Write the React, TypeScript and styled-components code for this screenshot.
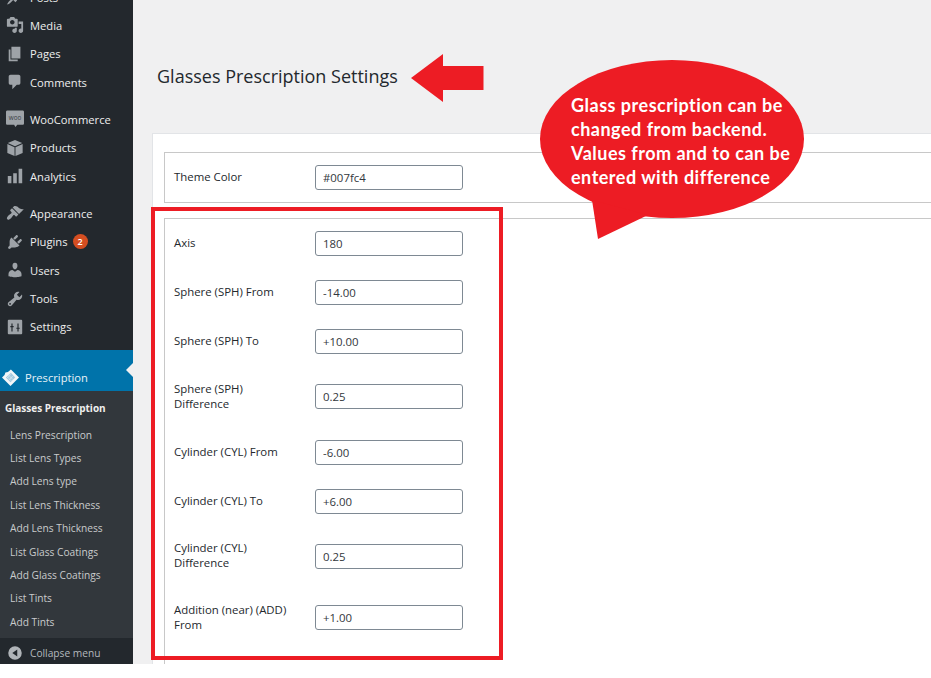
import React from "react";
import styled, { createGlobalStyle } from "styled-components";

const GlobalStyle = createGlobalStyle`
  html, body {
    margin: 0;
    padding: 0;
    background: #fff;
    font-family: "Open Sans", "Liberation Sans", sans-serif;
  }
  * {
    box-sizing: border-box;
  }
`;

const icons: Record<string, React.ReactNode> = {
  posts: (
    <path d="M10.44 3.02l1.82-1.82 6.36 6.35-1.83 1.82c-1.05-.68-2.48-.57-3.41.36l-.75.75c-.92.93-1.04 2.35-.35 3.41l-1.83 1.82-2.41-2.41-2.8 2.79c-.42.42-3.38 2.71-3.8 2.29s1.86-3.39 2.28-3.81l2.79-2.79L4.1 9.36l1.83-1.82c1.05.69 2.48.57 3.4-.36l.75-.75c.93-.92 1.05-2.35.36-3.41z" />
  ),
  media: (
    <path d="M13 11V4c0-.55-.45-1-1-1h-1.67L9 1H5L3.67 3H2c-.55 0-1 .45-1 1v7c0 .55.45 1 1 1h10c.55 0 1-.45 1-1zM7 4.5c1.38 0 2.5 1.12 2.5 2.5S8.38 9.5 7 9.5 4.5 8.38 4.5 7 5.62 4.5 7 4.5zM14 6h5v10.5c0 1.38-1.12 2.5-2.5 2.5S14 17.88 14 16.5s1.12-2.5 2.5-2.5c.17 0 .34.02.5.05V9h-3V6zm-4 8.05V13h2v3.5c0 1.38-1.12 2.5-2.5 2.5S7 17.88 7 16.5 8.12 14 9.5 14c.17 0 .34.02.5.05z" />
  ),
  pages: <path d="M6 15V2h10v13H6zm-1 1h8v2H3V5h2v11z" />,
  comments: (
    <path d="M5 2h9c1.1 0 2 .9 2 2v7c0 1.1-.9 2-2 2h-2l-5 5v-5H5c-1.1 0-2-.9-2-2V4c0-1.1.9-2 2-2z" />
  ),
  woo: (
    <>
      <path d="M1.5 0.5h17c.8 0 1.5.7 1.5 1.5v13c0 .8-.7 1.5-1.5 1.5h-6l-2 2.5-1.5-2.5H1.5C.7 16.5 0 15.8 0 15V2C0 1.2.7.5 1.5.5z" />
      <text x="10" y="11" fontSize="7" textAnchor="middle" fill="#3a3f44" fontFamily="Open Sans, sans-serif">
        woo
      </text>
    </>
  ),
  products: (
    <>
      <path d="M10 1l8 3.5-8 3.6-8-3.6z" />
      <path d="M1.5 5.5l8 3.6V19l-8-3.5z" />
      <path d="M18.5 5.5l-8 3.6V19l8-3.5z" />
    </>
  ),
  analytics: <path d="M18 18V2h-4v16h4zm-6 0V7H8v11h4zm-6 0v-8H2v8h4z" />,
  appearance: (
    <path d="M14.48 11.06L7.41 3.99l1.5-1.5c.5-.56 2.3-.47 3.51.32 1.21.8 1.43 1.28 2.91 2.1 1.18.64 2.45 1.26 4.45.85zm-.71.71L6.7 4.7 4.93 6.47c-.39.39-.39 1.02 0 1.41l1.06 1.06c.39.39.39 1.03 0 1.42-.6.6-1.43 1.11-2.21 1.69-.35.26-.7.53-1.01.84C1.43 14.23.4 16.08 1.4 17.07c.99 1 2.84-.03 4.18-1.36.31-.31.58-.66.85-1.02.57-.78 1.08-1.61 1.69-2.21.39-.39 1.02-.39 1.41 0l1.06 1.06c.39.39 1.02.39 1.41 0z" />
  ),
  plugins: (
    <path d="M13.11 4.36L9.87 7.6 8 5.73l3.24-3.24c.35-.34 1.05-.2 1.56.32.52.51.66 1.21.31 1.55zm-8 1.77l.91-1.12 9.01 9.01-1.19.84c-.71.71-2.63 1.16-3.82 1.16H6.14L4.9 17.26c-.59.59-1.54.59-2.12 0-.59-.58-.59-1.53 0-2.12l1.24-1.24v-3.88c0-1.13.4-3.19 1.09-3.89zm7.26 3.97l3.24-3.24c.34-.35 1.04-.21 1.55.31.52.51.66 1.21.31 1.55l-3.24 3.25z" />
  ),
  users: (
    <path d="M10 9.25c-2.27 0-2.73-3.44-2.73-3.44C7 4.02 7.82 2 9.97 2c2.16 0 2.98 2.02 2.71 3.81 0 0-.41 3.44-2.68 3.44zm0 2.57L12.72 10c2.39 0 4.52 2.33 4.52 4.53v2.49s-3.65 1.13-7.24 1.13c-3.65 0-7.24-1.13-7.24-1.13v-2.49c0-2.25 1.94-4.48 4.47-4.48z" />
  ),
  tools: (
    <path d="M16.68 9.77c-1.34 1.34-3.3 1.67-4.95.99l-5.41 6.52c-.99.99-2.59.99-3.58 0s-.99-2.59 0-3.57l6.52-5.42c-.68-1.65-.35-3.61.99-4.95 1.28-1.28 3.12-1.62 4.72-1.06l-2.89 2.89 2.82 2.82 2.86-2.87c.53 1.58.18 3.39-1.08 4.65zM3.81 16.21c.4.39 1.04.39 1.43 0 .4-.4.4-1.04 0-1.43-.39-.4-1.03-.4-1.43 0-.39.39-.39 1.03 0 1.43z" />
  ),
  settings: (
    <path
      fillRule="evenodd"
      d="M3 2h14c.6 0 1 .4 1 1v14c0 .6-.4 1-1 1H3c-.6 0-1-.4-1-1V3c0-.6.4-1 1-1zm3 4v3H4.8v1.3H6V15h1.3v-4.7h1.2V9H7.3V6H6zm6.7 0v4.7h-1.2V12h1.2v3H14v-3h1.2v-1.3H14V6h-1.3z"
    />
  ),
};

const mainMenu = [
  { icon: "posts", label: "Posts" },
  { icon: "media", label: "Media" },
  { icon: "pages", label: "Pages" },
  { icon: "comments", label: "Comments" },
  { icon: "woo", label: "WooCommerce", gap: true },
  { icon: "products", label: "Products" },
  { icon: "analytics", label: "Analytics" },
  { icon: "appearance", label: "Appearance", gap: true },
  { icon: "plugins", label: "Plugins", badge: 2 },
  { icon: "users", label: "Users" },
  { icon: "tools", label: "Tools" },
  { icon: "settings", label: "Settings" },
];

const subMenu = [
  "Lens Prescription",
  "List Lens Types",
  "Add Lens type",
  "List Lens Thickness",
  "Add Lens Thickness",
  "List Glass Coatings",
  "Add Glass Coatings",
  "List Tints",
  "Add Tints",
];

const fields = [
  { label: "Axis", value: "180" },
  { label: "Sphere (SPH) From", value: "-14.00" },
  { label: "Sphere (SPH) To", value: "+10.00" },
  { label: "Sphere (SPH) Difference", value: "0.25" },
  { label: "Cylinder (CYL) From", value: "-6.00" },
  { label: "Cylinder (CYL) To", value: "+6.00" },
  { label: "Cylinder (CYL) Difference", value: "0.25" },
  { label: "Addition (near) (ADD) From", value: "+1.00" },
];

function App() {
  return (
    <Page>
      <GlobalStyle />
      <Sidebar>
        <MenuList>
          {mainMenu.map((item) => (
            <MenuItem key={item.label} $gap={item.gap}>
              <MenuIcon viewBox="0 0 20 20">{icons[item.icon]}</MenuIcon>
              {item.label}
              {item.badge && <Badge>{item.badge}</Badge>}
            </MenuItem>
          ))}
        </MenuList>
        <ActiveItem>
          <ActiveIcon viewBox="0 0 20 20">
            <path d="M10.5 0.5L20 10 10 20 0 10l3-3 1-3 3-.5z" fill="#f2f6f8" />
            <path d="M10.5 4.5L15.5 10 10 15.5 4.5 10z" fill="#a3c9de" />
            <path
              d="M8 7.5l5 5M6.5 9.5l5 5M10.5 5.5l-4.5 5M13 8l-5 5"
              stroke="#e4f0f6"
              strokeWidth="0.7"
              fill="none"
            />
          </ActiveIcon>
          Prescription
          <Notch />
        </ActiveItem>
        <SubMenu>
          <SubTitle>Glasses Prescription</SubTitle>
          {subMenu.map((label) => (
            <SubItem key={label}>{label}</SubItem>
          ))}
        </SubMenu>
        <Collapse>
          <CollapseIcon viewBox="0 0 20 20">
            <path
              fillRule="evenodd"
              d="M10 2.5a7.5 7.5 0 1 1 0 15 7.5 7.5 0 0 1 0-15zM12.5 6L7 10l5.5 4V6z"
            />
          </CollapseIcon>
          Collapse menu
        </Collapse>
      </Sidebar>
      <Main>
        <Heading>Glasses Prescription Settings</Heading>
        <Panel>
          <FieldBox>
            <FieldRow>
              <FieldLabel>Theme Color</FieldLabel>
              <FieldInput readOnly value="#007fc4" />
            </FieldRow>
          </FieldBox>
          <LongFieldBox>
            {fields.map((field) => (
              <FieldRow key={field.label}>
                <FieldLabel>{field.label}</FieldLabel>
                <FieldInput readOnly value={field.value} />
              </FieldRow>
            ))}
          </LongFieldBox>
        </Panel>
      </Main>

      <ArrowMark viewBox="0 0 73 48">
        <path d="M0 24L32 0V12H72.5V36H32V48z" />
      </ArrowMark>
      <HighlightFrame />
      <Bubble>
        <BubbleShape viewBox="0 0 264 179">
          <ellipse cx="132" cy="79" rx="132" ry="79" />
          <path d="M52 140L58 179L108 155z" />
        </BubbleShape>
        <BubbleText>
          Glass prescription can be changed from backend. Values from and to can
          be entered with difference
        </BubbleText>
      </Bubble>
    </Page>
  );
}

const Page = styled.div`
  position: relative;
  display: flex;
  width: 931px;
  height: 664px;
  overflow: hidden;
  background: #f0f0f1;
`;

const Sidebar = styled.aside`
  display: flex;
  flex-direction: column;
  flex: none;
  width: 133px;
  height: 664px;
  background: #23282d;
`;

const MenuList = styled.ul`
  height: 350px;
  margin: 0;
  padding: 0;
  list-style: none;
  overflow: hidden;
`;

const MenuItem = styled.li<{ $gap?: boolean }>`
  display: flex;
  align-items: center;
  height: 28.4px;
  margin-top: ${(p) => (p.$gap ? "8.8px" : "0")};
  color: #eee;
  font-size: 11.2px;
  &:first-child {
    margin-top: -17.2px;
  }
`;

const MenuIcon = styled.svg`
  flex: none;
  width: 18px;
  height: 18px;
  margin: 0 6px 0 6px;
  fill: #9ea3a8;
`;

const Badge = styled.span`
  display: flex;
  align-items: center;
  justify-content: center;
  width: 15px;
  height: 15px;
  margin-left: 5px;
  border-radius: 50%;
  background: #d54e21;
  color: #fff;
  font-size: 9px;
  font-weight: 600;
`;

const ActiveItem = styled.div`
  position: relative;
  display: flex;
  align-items: center;
  flex: none;
  height: 41px;
  padding-top: 14px;
  background: #0073aa;
  color: #e8f2f7;
  font-size: 11.2px;
`;

const ActiveIcon = styled.svg`
  flex: none;
  width: 17px;
  height: 17px;
  margin: 0 6px 0 2px;
`;

const Notch = styled.span`
  position: absolute;
  top: 13px;
  right: 0;
  border-style: solid;
  border-width: 7px 7px 7px 0;
  border-color: transparent #f0f0f1 transparent transparent;
`;

const SubMenu = styled.div`
  flex: none;
  height: 247px;
  padding-top: 10px;
  background: #32373c;
`;

const SubTitle = styled.div`
  height: 22px;
  padding-left: 5px;
  color: #eee;
  font-size: 10px;
  font-weight: 700;
  line-height: 15px;
`;

const SubItem = styled.div`
  display: flex;
  align-items: center;
  height: 23.4px;
  padding-left: 10px;
  color: #c9cbcc;
  font-size: 10.2px;
`;

const Collapse = styled.div`
  display: flex;
  align-items: center;
  flex: 1;
  padding-top: 4px;
  color: #b4b9be;
  font-size: 10.2px;
`;

const CollapseIcon = styled.svg`
  flex: none;
  width: 18px;
  height: 18px;
  margin: 0 6px 0 6px;
  fill: #b0b4b8;
`;

const Main = styled.main`
  display: flex;
  flex-direction: column;
  flex: 1;
  min-width: 0;
  padding-left: 19px;
`;

const Heading = styled.h1`
  height: 133px;
  margin: 0;
  padding: 62px 0 0 5px;
  color: #23282d;
  font-size: 18px;
  font-weight: 400;
  line-height: 28px;
`;

const Panel = styled.section`
  flex: 1;
  padding: 18px 0 0 11px;
  overflow: hidden;
  background: #fff;
  border-top: 1px solid #e2e4e7;
  border-left: 1px solid #e2e4e7;
`;

const FieldBox = styled.div`
  width: 800px;
  padding-left: 9px;
  border: 1px solid #c8c8c8;
`;

const LongFieldBox = styled(FieldBox)`
  margin-top: 15px;
  padding-bottom: 40px;
`;

const FieldRow = styled.div`
  display: grid;
  grid-template-columns: 141px 148px;
  align-items: center;
  min-height: 49px;
`;

const FieldLabel = styled.label`
  padding: 14.75px 18px 16.75px 0;
  color: #23282d;
  font-size: 11.4px;
  line-height: 15px;
`;

const FieldInput = styled.input`
  width: 148px;
  height: 25px;
  padding: 0 7px;
  border: 1px solid #7e8993;
  border-radius: 3px;
  background: #fff;
  color: #32373c;
  font-family: inherit;
  font-size: 11.4px;
  outline: none;
`;

const ArrowMark = styled.svg`
  position: absolute;
  top: 54px;
  left: 410.5px;
  width: 73px;
  height: 48px;
  fill: #ed1c24;
`;

const HighlightFrame = styled.div`
  position: absolute;
  top: 207px;
  left: 151px;
  width: 352px;
  height: 453px;
  border: 4px solid #ed1c24;
  pointer-events: none;
`;

const Bubble = styled.div`
  position: absolute;
  top: 60px;
  left: 540px;
  width: 264px;
  height: 179px;
`;

const BubbleShape = styled.svg`
  position: absolute;
  inset: 0;
  width: 264px;
  height: 179px;
  fill: #ed1c24;
`;

const BubbleText = styled.p`
  position: absolute;
  top: 33px;
  left: 31px;
  width: 228px;
  margin: 0;
  color: #fff;
  font-family: Lato, "Liberation Sans", sans-serif;
  font-size: 18px;
  font-weight: 700;
  line-height: 24px;
  letter-spacing: 0.5px;
`;

export default App;
